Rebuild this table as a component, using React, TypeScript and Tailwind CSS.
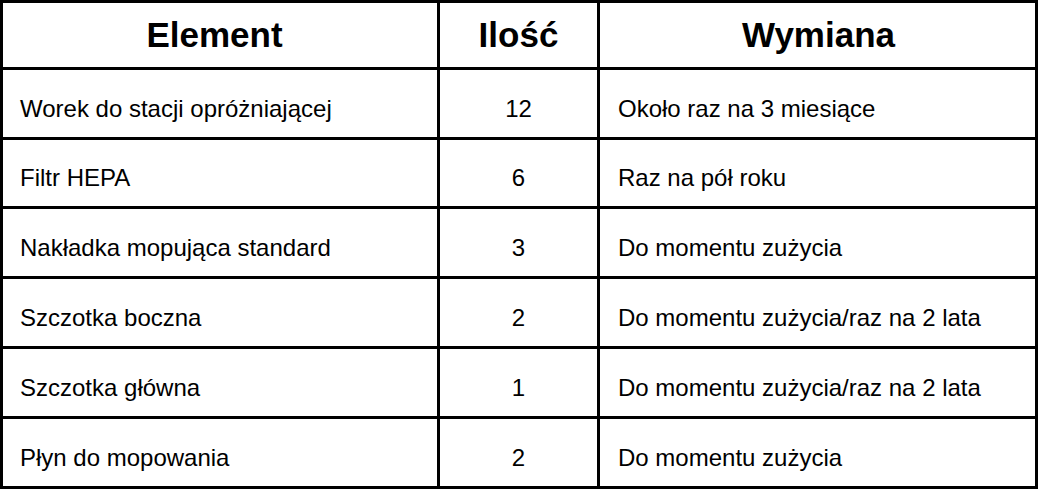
import React from 'react';

const ROWS = [
  { name: 'Worek do stacji opróżniającej', qty: '12', change: 'Około raz na 3 miesiące' },
  { name: 'Filtr HEPA', qty: '6', change: 'Raz na pół roku' },
  { name: 'Nakładka mopująca standard', qty: '3', change: 'Do momentu zużycia' },
  { name: 'Szczotka boczna', qty: '2', change: 'Do momentu zużycia/raz na 2 lata' },
  { name: 'Szczotka główna', qty: '1', change: 'Do momentu zużycia/raz na 2 lata' },
  { name: 'Płyn do mopowania', qty: '2', change: 'Do momentu zużycia' },
];

const App: React.FC = () => {
  return (
    <div className="w-[1040px] h-[491px] bg-white" style={{ fontFamily: '"Liberation Sans", Arial, sans-serif' }}>
      <div className="grid w-[1038px] bg-black p-[3px] gap-[3px] grid-cols-[434px_157px_435px] grid-rows-[64px_67px_66px_67px_67px_67px_67px] text-black">
        {/* Header */}
        <div className="bg-white flex items-center justify-center pr-[11px] text-[35px] font-bold">Element</div>
        <div className="bg-white flex items-center justify-center text-[35px] font-bold">Ilość</div>
        <div className="bg-white flex items-center justify-center pl-[2px] text-[35px] font-bold">Wymiana</div>

        {ROWS.map((row) => (
          <React.Fragment key={row.name}>
            <div className="bg-white flex items-center pl-[17px] pt-[10px] text-[24px]">{row.name}</div>
            <div className="bg-white flex items-center justify-center pt-[10px] text-[24px]">{row.qty}</div>
            <div className="bg-white flex items-center pl-[18px] pt-[10px] text-[24px]">{row.change}</div>
          </React.Fragment>
        ))}
      </div>
    </div>
  );
};

export default App;
